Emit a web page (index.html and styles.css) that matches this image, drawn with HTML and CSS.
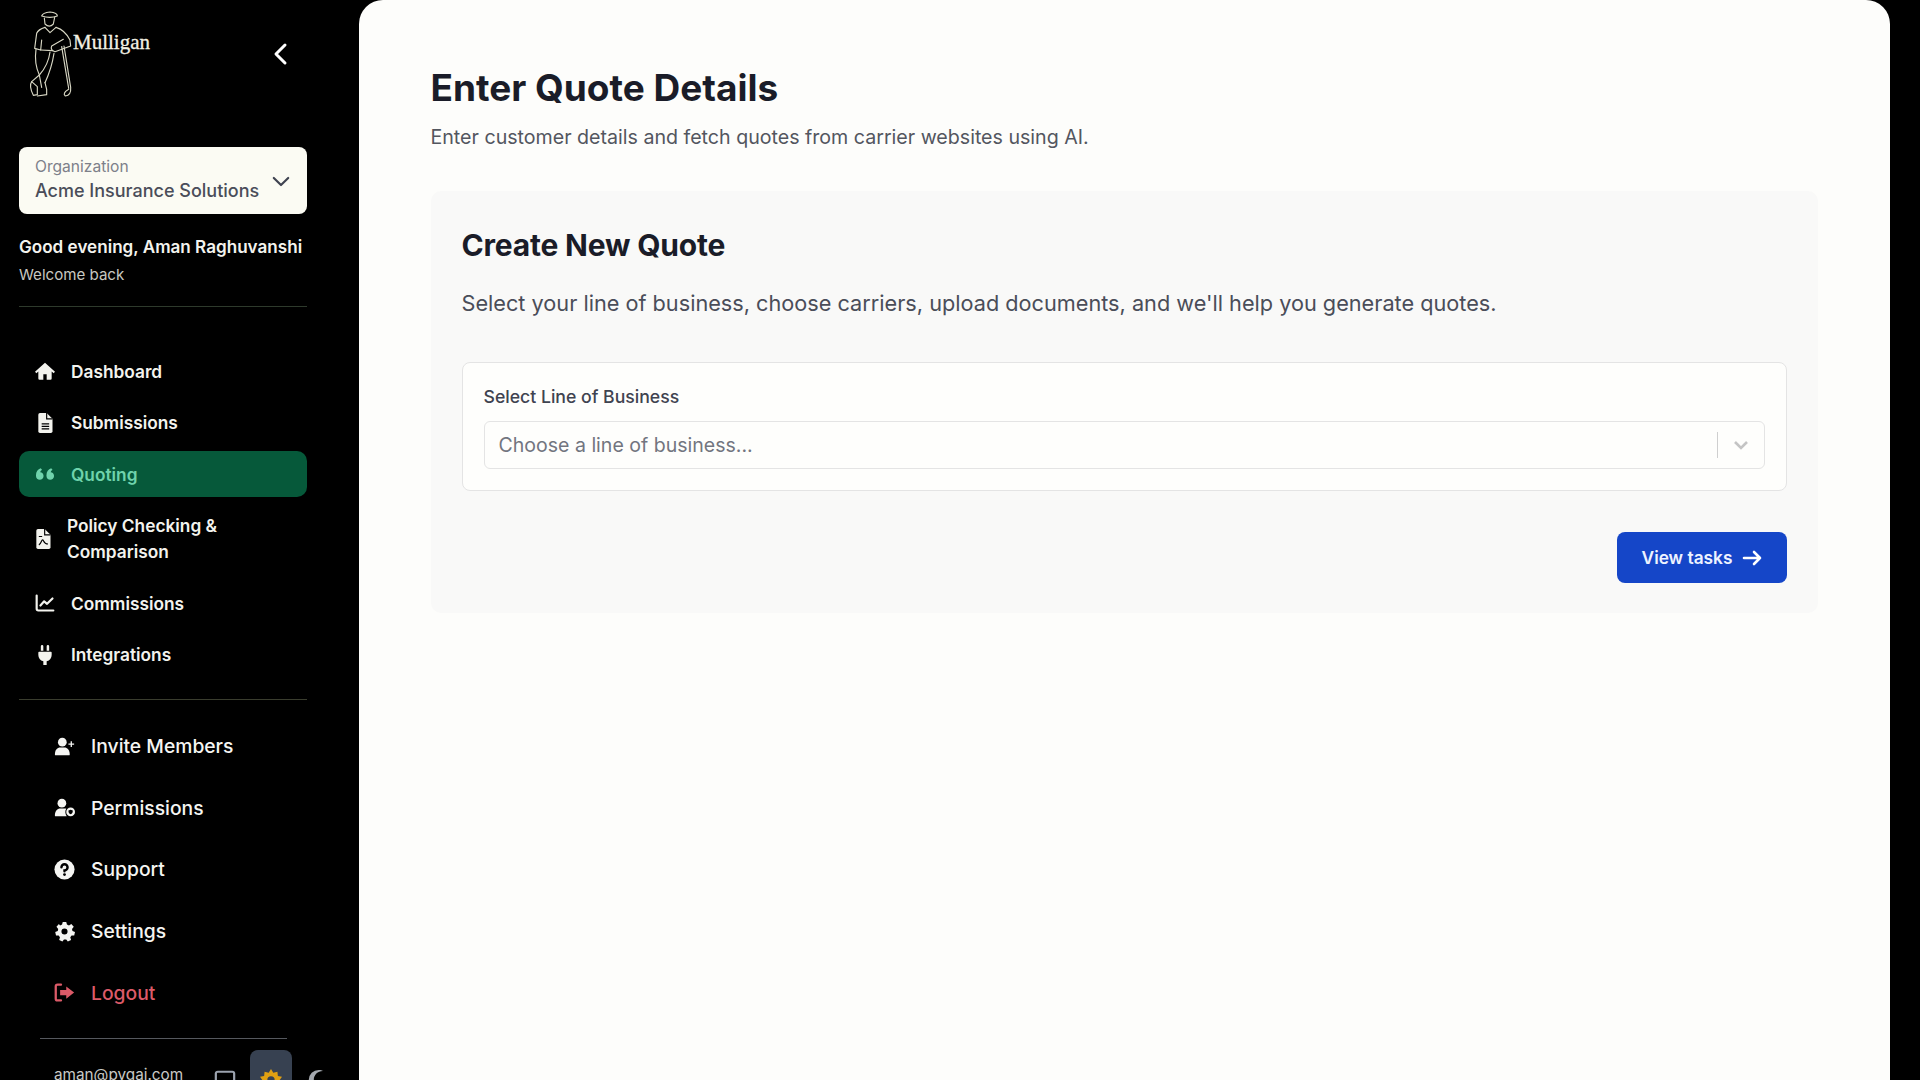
FILE: index.html
```html
<!DOCTYPE html>
<html lang="en">
<head>
<meta charset="utf-8">
<title>Enter Quote Details</title>
<link rel="stylesheet" href="styles.css">
</head>
<body>
<div class="app">
  <aside class="sidebar">
    <header class="brand">
      <div class="logo">
        <svg class="golfer" viewBox="84 30 135 270" fill="none" stroke="#d8d7c4" stroke-width="3.400" stroke-linecap="round" stroke-linejoin="round">
          <path d="M125 48Q128 38 150 36Q172 38 172 48Q150 56 125 48Z"/>
          <path d="M133 54L135 72Q148 85 160 72L164 52"/>
          <path d="M135 82L150 98L168 82"/>
          <path d="M135 82Q115 88 110 100L104 145L122 150L125 120"/>
          <path d="M168 82Q195 90 210 120L212 138L165 155Q150 150 155 138L190 118"/>
          <path d="M122 150L158 152"/>
          <path d="M108 148Q102 190 118 225L95 245"/>
          <path d="M162 160Q155 205 135 248"/>
          <path d="M150 156Q145 195 118 225L125 262"/>
          <path d="M95 245Q86 258 100 286L112 284L112 260Z"/>
          <path d="M135 248L140 268L140 284L112 288"/>
          <path d="M185 140L206 265"/>
          <path d="M192 138L212 262Q214 286 196 288Q186 280 206 268"/>
        </svg>
        <span class="wordmark">Mulligan</span>
      </div>
      <button class="collapse" aria-label="Collapse">
        <svg viewBox="0 0 24 24" fill="none" stroke="#fff" stroke-width="3" stroke-linecap="round" stroke-linejoin="round"><path d="M16 3L7 12L16 21"/></svg>
      </button>
    </header>

    <div class="org">
      <div class="org-text">
        <span class="org-label">Organization</span>
        <span class="org-name">Acme Insurance Solutions</span>
      </div>
      <svg class="org-caret" viewBox="0 0 20 12" fill="none" stroke="#3f4350" stroke-width="2.400" stroke-linecap="round" stroke-linejoin="round"><path d="M2 2L10 10L18 2"/></svg>
    </div>

    <div class="greeting">
      <p class="hello">Good evening, Aman Raghuvanshi</p>
      <p class="welcome">Welcome back</p>
    </div>

    <nav class="nav">
      <a class="nav-item">
        <svg class="icon" viewBox="0 0 24 24" fill="currentColor"><path d="M12 2L0 12.800l1.600 1.800L4 12.600V21a1.500 1.500 0 0 0 1.500 1.500H10v-6.500h4v6.500h4.500A1.500 1.500 0 0 0 20 21v-8.400l2.400 2 1.600-1.800z"/></svg>
        <span>Dashboard</span>
      </a>
      <a class="nav-item">
        <svg class="icon" viewBox="0 0 24 24"><path fill="currentColor" d="M6 0h8l7 7v15a2 2 0 0 1-2 2H6a2 2 0 0 1-2-2V2a2 2 0 0 1 2-2z"/><path fill="none" stroke="#000" stroke-width="1.400" d="M14 0v7h7M8 13h9M8 16h9M8 19h9"/></svg>
        <span>Submissions</span>
      </a>
      <a class="nav-item active">
        <svg class="icon" viewBox="0 5 21 16" fill="currentColor"><path d="M6 7C3 8 1 10.500 1 14.500 1 17.500 2.800 19 5 19s4-1.700 4-4-1.600-3.800-3.500-3.800c.2-1.200 1-2 2-2.400z"/><path d="M17 7c-3 1-5 3.500-5 7.500 0 3 1.800 4.500 4 4.500s4-1.700 4-4-1.600-3.800-3.500-3.800c.2-1.200 1-2 2-2.400z"/></svg>
        <span>Quoting</span>
      </a>
      <a class="nav-item tall">
        <svg class="icon" viewBox="0 0 24 24"><path fill="currentColor" d="M6 0h8l7 7v15a2 2 0 0 1-2 2H6a2 2 0 0 1-2-2V2a2 2 0 0 1 2-2z"/><path fill="none" stroke="#000" stroke-width="1.400" d="M14 0v7h7M7 9h4M7 19c3-1 3-6 4.500-6s1 5 6.500 5"/></svg>
        <span>Policy Checking &amp; Comparison</span>
      </a>
      <a class="nav-item">
        <svg class="icon" viewBox="0 0 24 24" fill="none" stroke="currentColor" stroke-width="2.600" stroke-linecap="round" stroke-linejoin="round"><path d="M2 3v16a2 2 0 0 0 2 2h18"/><path d="M6.500 15l4.500-5 3.500 3L21 6.500"/></svg>
        <span>Commissions</span>
      </a>
      <a class="nav-item">
        <svg class="icon" viewBox="0 0 24 24" fill="currentColor"><path d="M7 1.500a1.500 1.500 0 0 1 3 0V7H7zM14 1.500a1.500 1.500 0 0 1 3 0V7h-3zM5 8h14a1 1 0 0 1 1 1v3a8 8 0 0 1-6 7.500V24h-4v-4.500A8 8 0 0 1 4 12V9a1 1 0 0 1 1-1z"/></svg>
        <span>Integrations</span>
      </a>
    </nav>

    <nav class="nav-secondary">
      <a class="sub-item">
        <svg class="icon" viewBox="0 0 24 24" fill="currentColor"><circle cx="9.500" cy="7" r="5"/><path d="M1 21c0-5 3-8 6-8h5c3 0 6 3 6 8 0 .6-.4 1-1 1H2c-.6 0-1-.4-1-1z"/><path d="M19 6h1.500v2.500H23V10h-2.500v2.500H19V10h-2.500V8.500H19z"/></svg>
        <span>Invite Members</span>
      </a>
      <a class="sub-item">
        <svg class="icon" viewBox="0 0 24 24" fill="currentColor"><circle cx="9" cy="7" r="5"/><path d="M1 21c0-5 3-8 6-8h5c1 0 1.500.2 2 .5-1.500 2-1.500 6 .5 8.500H2c-.6 0-1-.4-1-1z"/><path fill-rule="evenodd" d="M19 12a5 5 0 1 1 0 10 5 5 0 0 1 0-10zm0 2.500l-2.500 1c0 2.500.8 3.500 2.500 4.300 1.700-.8 2.500-1.800 2.500-4.300z"/></svg>
        <span>Permissions</span>
      </a>
      <a class="sub-item">
        <svg class="icon" viewBox="0 0 24 24"><circle cx="12" cy="12" r="11.500" fill="currentColor"/><path fill="none" stroke="#000" stroke-width="2.800" stroke-linecap="round" d="M8.500 9.500A3.500 3.500 0 1 1 12 13v1"/><circle cx="12" cy="17.800" r="1.600" fill="#000"/></svg>
        <span>Support</span>
      </a>
      <a class="sub-item">
        <svg class="icon" viewBox="0 0 24 24" fill="currentColor"><path fill-rule="evenodd" d="M10 1h4l.8 3 2.300 1 2.700-1.600 2.800 3.300-2 2.300.5 2.500 2.900 1-.9 4-3 .2-1.500 2 .9 2.900-3.700 1.900-1.800-2.500h-2.600l-1.800 2.500-3.700-1.900.9-2.900-1.500-2-3-.2-.9-4 2.900-1 .5-2.500-2-2.300 2.800-3.300L6.900 5l2.300-1zM12 8.500a3.500 3.500 0 1 0 0 7 3.500 3.500 0 0 0 0-7z"/></svg>
        <span>Settings</span>
      </a>
      <a class="sub-item logout">
        <svg class="icon" viewBox="0 0 24 24"><path fill="none" stroke="currentColor" stroke-width="2.600" stroke-linecap="round" stroke-linejoin="round" d="M8 3H4a2 2 0 0 0-2 2v14a2 2 0 0 0 2 2h4"/><path fill="currentColor" d="M14 5l9 7-9 7v-4H7V9h7z"/></svg>
        <span>Logout</span>
      </a>
    </nav>

    <footer class="account">
      <span class="email">aman@pygai.com</span>
      <div class="theme">
        <span class="theme-btn">
          <svg class="theme-icon" viewBox="0 0 24 24" fill="none" stroke="#9ca3af" stroke-width="2.400"><rect x="2" y="3" width="20" height="14" rx="2"/><path d="M1 20h22"/></svg>
        </span>
        <span class="theme-btn on">
          <svg class="theme-icon" viewBox="0 0 24 24" fill="#e0a012"><path fill-rule="evenodd" d="M12 0l2.500 4 4.500-1 .5 4.500 4.500 1-2.500 3.500 2.500 3.500-4.500 1-.5 4.500-4.500-1L12 24l-2.500-4-4.500 1-.5-4.500-4.500-1L2.500 12 0 8.500l4.500-1L5 3l4.500 1zM12 8a4 4 0 1 0 0 8 4 4 0 0 0 0-8z"/></svg>
        </span>
        <span class="theme-btn">
          <svg class="theme-icon" viewBox="0 0 24 24" fill="#a4a8ae"><path d="M14 1a11 11 0 1 0 0 22c2 0 3.500-.5 5-1.300C13 22 8.500 17.500 8.500 12S13 2 19 2.300C17.500 1.500 16 1 14 1z"/></svg>
        </span>
      </div>
    </footer>
  </aside>

  <main class="panel">
    <h1 class="title">Enter Quote Details</h1>
    <p class="subtitle">Enter customer details and fetch quotes from carrier websites using AI.</p>

    <section class="card">
      <h2 class="card-title">Create New Quote</h2>
      <p class="card-desc">Select your line of business, choose carriers, upload documents, and we'll help you generate quotes.</p>

      <div class="field-box">
        <label class="field-label">Select Line of Business</label>
        <div class="select">
          <span class="placeholder">Choose a line of business...</span>
          <span class="select-sep"></span>
          <svg class="select-caret" viewBox="0 0 20 20" fill="none" stroke="#c4c4c4" stroke-width="2.600"><path d="M4 7l6 6 6-6"/></svg>
        </div>
      </div>

      <div class="actions">
        <button class="primary">
          <span>View tasks</span>
          <svg class="arrow" viewBox="0 0 20 20" fill="none" stroke="#fff" stroke-width="2.600" stroke-linecap="round" stroke-linejoin="round"><path d="M2 10h16M12 4l6 6-6 6"/></svg>
        </button>
      </div>
    </section>
  </main>
</div>
</body>
</html>
```
FILE: styles.css
```css
* { box-sizing: border-box; }
html, body { margin: 0; height: 100%; overflow: hidden; background: #000; }
body { font-family: Inter, "Liberation Sans", sans-serif; }
p, h1, h2 { margin: 0; }

.app { display: flex; height: 1080px; background: #000; padding-right: 30px; overflow: hidden; }

.sidebar { width: 359px; flex: none; height: 1080px; padding: 0 52px 0 19px; color: #f3f3ee; overflow: hidden; }

.brand { height: 147px; display: flex; align-items: flex-start; justify-content: space-between; }
.logo { display: flex; align-items: flex-start; padding: 10px 0 0 9px; }
.golfer { width: 45px; height: 90px; display: block; }
.wordmark { font-family: "Liberation Serif", serif; font-size: 21px; font-weight: 400; color: #f2f1e4; margin: 18px 0 0 0; line-height: 28px; -webkit-text-stroke: 0.3px #f2f1e4; }
.collapse { width: 24px; height: 24px; margin: 42px 14px 0 0; padding: 0; background: none; border: 0; }
.collapse svg { display: block; width: 24px; height: 24px; }

.org { height: 67px; border-radius: 8px; background: #fbfbf3; padding: 9px 17px 0 16px; display: flex; justify-content: space-between; align-items: flex-start; }
.org-text { display: flex; flex-direction: column; }
.org-label { font-size: 15.600px; line-height: 22px; color: #7d808a; }
.org-name { font-size: 18px; line-height: 25px; font-weight: 500; color: #4a4d59; white-space: nowrap; }
.org-caret { width: 18px; height: 11px; margin-top: 20px; }

.greeting { padding-top: 19px; padding-bottom: 19px; border-bottom: 1px solid #2e3a2c; }
.hello { font-size: 17.100px; line-height: 28px; font-weight: 600; color: #f3f3ee; white-space: nowrap; }
.welcome { font-size: 15.100px; line-height: 24px; margin-top: 2px; color: #c8c8c0; }

.nav { display: flex; flex-direction: column; gap: 5.5px; padding: 41px 0 21px; border-bottom: 1px solid #3a3d2e; }
.nav-item { height: 46px; padding: 0 16px; border-radius: 10px; display: flex; align-items: center; gap: 16px; font-size: 17.300px; font-weight: 600; color: #f3f3ee; }
.nav-item .icon { width: 20px; height: 20px; flex: none; }
.nav-item.active { background: #06593a; color: #6fd3ac; }
.nav-item.tall { height: 72px; line-height: 25.700px; gap: 14px; padding-left: 14px; padding-right: 40px; }

.nav-secondary { display: flex; flex-direction: column; padding-top: 16px; padding-bottom: 15px; }
.sub-item { height: 61.600px; padding-left: 35px; display: flex; align-items: center; gap: 16px; font-size: 19.300px; font-weight: 500; color: #f5f5f2; }
.sub-item .icon { width: 21px; height: 21px; flex: none; }
.logout { color: #dc5a68; }

.account { margin: 0 20px 0 21px; border-top: 1px solid #55585e; padding: 11px 0 0 14px; display: flex; align-items: flex-start; }
.email { font-size: 15.300px; line-height: 24px; color: #c9c9c6; margin-top: 13px; white-space: nowrap; }
.theme { display: flex; gap: 4px; margin-left: 21px; }
.theme-btn { width: 42px; height: 42px; border-radius: 8px; display: flex; align-items: center; justify-content: center; flex: none; }
.theme-btn.on { background: #374151; }
.theme-icon { width: 22px; height: 22px; margin-top: 18px; }

.panel { flex: 1; min-width: 0; height: 1100px; background: #fdfdfb; border-radius: 24px 24px 0 0; padding: 64px 72px 0 71.500px; }
.title { font-size: 37px; line-height: 48px; font-weight: 700; color: #1a1c28; }
.subtitle { font-size: 19.630px; line-height: 28px; margin-top: 11px; color: #53565f; }

.card { margin-top: 40px; background: #f9f9f8; border-radius: 10px; padding: 36px 31px 31px; height: 422px; }
.card-title { font-size: 30px; line-height: 36px; font-weight: 700; color: #1a1c28; letter-spacing: -0.2px; }
.card-desc { font-size: 21.700px; line-height: 32px; margin-top: 24px; color: #4a4d59; }

.field-box { margin-top: 43px; height: 129px; background: #fefefc; border: 1px solid #e4e4e4; border-radius: 8px; padding: 21px; }
.field-label { display: block; font-size: 17.650px; line-height: 26px; font-weight: 500; color: #3f4350; }
.select { margin-top: 11px; height: 48px; border: 1px solid #e4e4e4; border-radius: 6px; display: flex; align-items: center; padding: 0 13px 0 14px; }
.placeholder { flex: 1; font-size: 19.550px; color: #72757f; }
.select-sep { width: 1px; height: 26px; background: #cfcfcf; margin-right: 13px; }
.select-caret { width: 20px; height: 20px; }

.actions { display: flex; justify-content: flex-end; margin-top: 41px; }
.primary { height: 51px; width: 170px; border: 0; border-radius: 8px; background: #1546c8; color: #eef3ff; display: flex; align-items: center; justify-content: center; gap: 10px; font-family: inherit; font-size: 17.300px; font-weight: 600; }
.arrow { width: 20px; height: 20px; }
```
